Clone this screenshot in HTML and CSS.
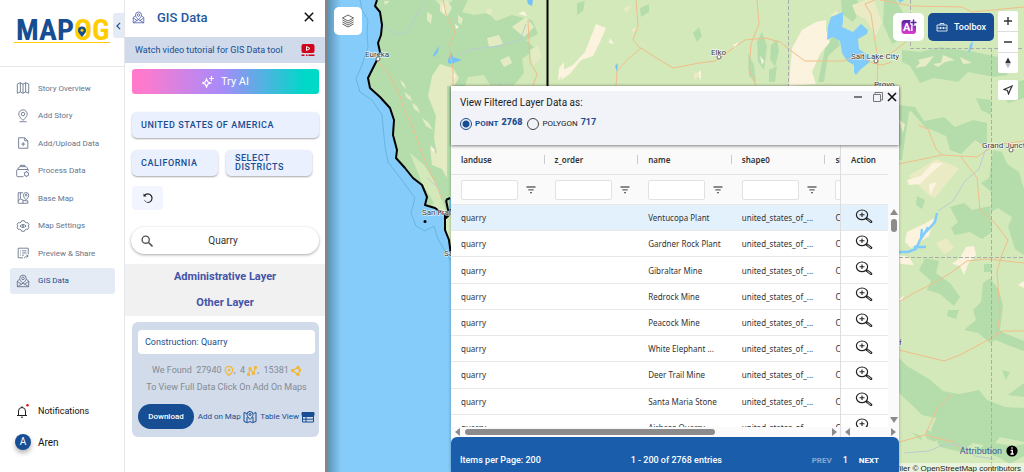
FILE: index.html
```
<!DOCTYPE html>
<html lang="en">
<head>
    <meta charset="UTF-8">
    <meta name="viewport" content="width=device-width, initial-scale=1.0">
    <title>MAPOG - GIS Data</title>
    <link rel="stylesheet" href="styles.css">
</head>
<body>
    <!-- shared icons -->
    <svg class="sprite" aria-hidden="true">
        <symbol id="i-filter" viewBox="0 0 10 8"><path d="M.5 1h9M2.3 3.8h5.4M4 6.6h2" stroke="#666" stroke-width="1.3"/></symbol>
        <symbol id="i-zoom" viewBox="0 0 18 14"><ellipse cx="7" cy="5.8" rx="5.6" ry="4.8" stroke="#222" stroke-width="1.2"/><path d="M4.5 5.8h5M7 3.5v4.6M10.8 9.3l1.2 1" stroke="#222" stroke-width="1.1"/><path d="M12 9.8l4 3" stroke="#222" stroke-width="2.6" stroke-linecap="round"/><path d="M12.4 10.1l3.4 2.6" stroke="#fff" stroke-width=".8"/></symbol>
        <symbol id="i-mappin" viewBox="0 0 16 16"><path d="M4.300 6L1.500 8v6.500h13V8l-2.800-2M1.500 8.500l5 3.500M14.500 8.500l-5 3.500M1.500 14.500l6.500-4 6.500 4M8 10.500C5.500 8.500 4.300 7 4.300 5a3.700 3.700 0 017.400 0c0 2-1.200 3.500-3.700 5.500z"/><circle cx="8" cy="5" r="1.500"/></symbol>
    </svg>

    <nav class="sidebar">
        <div class="logo">
            <svg viewBox="0 0 98 34" width="98" height="34">
                <text x="2" y="27" class="logo-text"><tspan fill="#174d92">MAP</tspan><tspan fill="#fc0">OG</tspan></text>
                <path d="M0 29.500h96" stroke="#fc0" stroke-width="1.200"/>
                <path d="M68 24c-3-3.500-4-4.800-4-6.500a4 4 0 018 0c0 1.700-1 3-4 6.500z" fill="#174d92"/>
                <circle cx="68" cy="17.300" r="1.500" fill="#fc0"/>
            </svg>
            <button class="collapse" aria-label="Collapse"><svg viewBox="0 0 6 10" width="5" height="8"><path d="M5 1L1 5l4 4" stroke="#174d92" stroke-width="1.400"/></svg></button>
        </div>
        <div class="menu">
            <a href="#"><svg viewBox="0 0 16 16"><path d="M1.500 3.500L5 2v10.500L1.500 14zM5 2l3 1.500V14l-3-1.500M8 3.500L11 2v10.500L8 14M11 2l3.500 1.500V14L11 12.500"/></svg>Story Overview</a>
            <a href="#"><svg viewBox="0 0 16 16"><path d="M8 13C4.500 9.500 3.200 8 3.200 5.800a4.800 4.800 0 019.600 0C12.800 8 11.500 9.500 8 13zM4 14.500h8"/><circle cx="8" cy="5.800" r="2"/></svg>Add Story</a>
            <a href="#"><svg viewBox="0 0 16 16"><path d="M3 2h7l3.500 3.500V14H3zM10 2v3.500h3.500M8.200 7v4.500M6 9.200h4.500"/></svg>Add/Upload Data</a>
            <a href="#"><svg viewBox="0 0 16 16"><path d="M8.500 14.500H2a1.200 1.200 0 01-1.200-1.200V7.500A1.200 1.200 0 012 6.300h12V8M2.500 6V4.500L4.500 3h7L13 4.500V6M5 3V1.500h5V3"/><circle cx="12" cy="11.500" r="2.400"/><path d="M12 8v1M12 14v1M9 9.800l.8.500M14.200 12.700l.8.500M9 13.200l.8-.5M14.200 10.300l.8-.5"/></svg>Process Data</a>
            <a href="#"><svg viewBox="0 0 16 16"><path d="M8 2H2.500v12h11v-3M5 2v7l-2.500 2.500M5 9l3 1.500V14M8 10.500l5.500 1"/><path d="M11.500 10C9 7.500 8.500 6 8.500 4.800a3 3 0 016 0c0 1.200-.5 2.700-3 5.200z"/><circle cx="11.500" cy="4.800" r="1"/></svg>Base Map</a>
            <a href="#"><svg viewBox="0 0 16 16"><path d="M6.500 2h3l.7 1.500 1.700.8 1.500-.2 1.400 2.400-1 1.500 1 1.500-1.400 2.400-1.500-.2-1.700.8L9.500 14h-3l-.7-1.500-1.700-.8-1.500.2-1.400-2.400 1-1.500-1-1.500 1.400-2.400 1.500.2 1.700-.8z"/><path d="M4.500 8q3.500-3.500 7 0-3.500 3.500-7 0z"/><circle cx="8" cy="8" r=".8"/></svg>Map Settings</a>
            <a href="#"><svg viewBox="0 0 16 16"><path d="M8 13.500H2.500V2.500h11.500v7M4.500 5.500h1M7 5.500h5M4.500 8h1M7 8h5M4.500 10.500h1M7 10.500h2M9.500 14c.5-2 2-2.500 4-2.500M12 10l2 1.500-2 1.700"/></svg>Preview &amp; Share</a>
            <a href="#" class="active"><svg><use href="#i-mappin"/></svg>GIS Data</a>
        </div>
        <div class="account">
            <a href="#" class="notify"><svg viewBox="0 0 16 16"><path d="M2 12.500h10M3.500 12.500V8a3.500 3.500 0 017 0v4.500M7 4.500V3.200M6 14.200h2" stroke="#222"/><circle cx="12.500" cy="2.200" r="1.300" fill="#e01818" stroke="none"/></svg>Notifications</a>
            <a href="#"><span class="avatar">A</span>Aren</a>
        </div>
    </nav>

    <aside class="panel">
        <header class="panel-head">
            <svg class="head-icon"><use href="#i-mappin"/></svg>
            <h1>GIS Data</h1>
            <button class="plain" aria-label="Close"><svg viewBox="0 0 10 10" width="10" height="10"><path d="M.8.8l8.400 8.400M9.200.8L.8 9.200" stroke="#111" stroke-width="1.500"/></svg></button>
        </header>
        <a href="#" class="tutorial">Watch video tutorial for GIS Data tool
            <svg viewBox="0 0 14 14" width="14" height="14"><rect x=".5" y="1" width="13" height="9" rx="2" fill="#d0021b"/><path d="M5.500 3.500l3.500 2-3.500 2z" stroke="#fff"/><path d="M.5 12.300h3M5 12.300h1.500M7.500 12.300h6" stroke="#d0021b" stroke-width="1.400"/></svg>
        </a>
        <div class="filters">
            <button class="try-ai"><svg viewBox="0 0 12 12" width="12" height="12"><path d="M4.500 3l1.200 2.900L8.500 7 5.700 8.200 4.500 11 3.300 8.200.5 7l2.800-1.100z" stroke="#fff" stroke-width="1.200"/><path d="M9.500 0v5M7 2.500h5" stroke="#fff" stroke-width="1.200"/></svg>Try AI</button>
            <button class="choice">UNITED STATES OF AMERICA</button>
            <div class="choice-row">
                <button class="choice">CALIFORNIA</button>
                <button class="choice">SELECT DISTRICTS</button>
            </div>
            <button class="reset" aria-label="Reset"><svg viewBox="0 0 12 12" width="12" height="12"><path d="M2.200 3.800A4.300 4.300 0 116 10.500" stroke="#222" stroke-width="1.200"/><path d="M6 10.500a4.300 4.300 0 01-3.800-3" stroke="#222" stroke-dasharray="1.500 1"/><path d="M1.500 1.500v3h3z" fill="#222"/></svg></button>
            <label class="search">
                <svg viewBox="0 0 12 12" width="12" height="12"><circle cx="4.700" cy="4.700" r="3.600" stroke="#555" stroke-width="1.400"/><path d="M7.500 7.500l4 4" stroke="#555" stroke-width="1.600"/></svg>
                <input type="text" value="Quarry" aria-label="Search layer">
            </label>
        </div>
        <div class="layers">
            <h2>Administrative Layer</h2>
            <h2>Other Layer</h2>
        </div>
        <section class="card">
            <h3>Construction: Quarry</h3>
            <p>We Found &nbsp;27940 <svg viewBox="0 0 10 10"><path d="M5 9.500C2.500 7 1.200 5.800 1.200 4.200a3.800 3.800 0 017.600 0C8.800 5.800 7.500 7 5 9.500zM5 2.800v2.800M3.600 4.200h2.800"/></svg>, &nbsp;4 <svg viewBox="0 0 10 10"><path d="M1.500 8.500l1.500-6 3.500 5 2-6"/><circle cx="1.500" cy="8.500" r="1"/><circle cx="3" cy="2.500" r="1"/><circle cx="6.500" cy="7.500" r="1"/><circle cx="8.500" cy="1.500" r="1"/></svg>, &nbsp;15381 <svg viewBox="0 0 10 10"><path d="M1.500 4.500l5.500-3 2 2.500-2 4.500z"/><circle cx="1.500" cy="4.500" r="1"/><circle cx="7" cy="1.500" r="1"/><circle cx="9" cy="4" r=".8"/><circle cx="7" cy="8.500" r="1"/></svg></p>
            <p>To View Full Data Click On Add On Maps</p>
            <div class="card-actions">
                <button class="download">Download</button>
                <a href="#">Add on Map<svg viewBox="0 0 14 14"><path d="M4 3.500L1 2.500v9l3.500 1.200L7 11.500l2.500 1.200L13 11.500v-9l-2.500 1M4 7v5.500M10 7v5.500M7 9.500C5 7.500 4 6 4 4.500a3 3 0 016 0C10 6 9 7.500 7 9.500z"/><circle cx="7" cy="4.500" r="1"/></svg></a>
                <a href="#">Table View<svg viewBox="0 0 14 14"><path d="M1.500 3h11v9h-11zM1.500 6.500h11M1.500 9.200h11M5 6v6"/><path d="M1 2.500h12v3H1z" fill="#174d92"/></svg></a>
            </div>
        </section>
    </aside>

    <main class="map">
        <svg class="basemap" viewBox="327 0 697 472" preserveAspectRatio="xMidYMid slice">
            <rect x="327" width="697" height="472" fill="#d4e9b9"/>
            <!-- forests, northern California -->
            <path fill="#b5ddac" d="M340 0h95l8 8 10-8h15l-6 12 12 3 14-2 8 8 16-6 20 5 6 14-12 6 10 9-14 10 2 14-10 12h-24l-6-10-16 2-10 30v110l-12-6-8-24-14-22-14-12 12 30 12 20-8 10-14-6H340z"/>
            <path fill="#e3ebc2" d="M440 64l13 4 6 10-5 8h-7v92l-8-14-5-26 2-22-8-20 4-20zM430 147l8 8 4 14-10-4zM404 92l6 4 2 5-5-3zM412 103l5 3 3 7-6-4zM400 80l4 3 2 6-4-4zM422 118l6 4 5 8-7-4zM427 12l5 3-1 9-4-4zM440 2l7-2 5 8-5 9-7-6zM384 1h6l-5 4zM458 15l5 4-2 6-3-3zM487 38l12-3 4 9-14 3zM512 27l14-10 8 10-10 10zM530 50l8-5 4 12-9 9zM487 8l6 2-3 5-4-2zM500 60l9-4 3 7-8 4z"/>
            <path fill="#fcf3df" d="M430 145l5 5-2 3zM442 4l3 5-2 5zM559 68l5-6v11l-6 8zM455 24l4 3-3 2zM518 14l6-3 3 5zM452 73l4 2-2 5z"/>
            <!-- Nevada and Utah -->
            <path fill="#b5ddac" d="M577 3l8-2-2 10-6 4zM640 8l9-4v8l-8 5zM693 33l6-6 3 9-5 6zM757 42l5-10 5 14-3 24-6-8zM748 53l6 12 2 17-7-6zM771 45l6-6 2 12-4 16-5-8zM769 70l8-4-2 16h-6zM826 44l10-10 4 11-12 11-4 26h-6zM841 0h16l4 10-8 12-11-8zM884 0h12l8 14-9 8 5 18-8 4-9-20zM902 50l18 2 20-5 30 4 28 6 10 18-14 2-26-5-10 10-24-4-14 5-10-17-8-4z"/>
            <path fill="#fcf3df" d="M596 24l10 4-6 14-7 14-12 4-11 14-9 6 2-10 10-5 12-13zM789 86l3-38 10-18 14-8 10-2v10l4 12-10 12-8 18 4 12zM760 56l4 5-2 4zM733 45l6-3-4 7zM610 38l4 6-5-1zM697 74l4-4v10z"/>
            <path fill="#eaebc5" d="M624 8l8-3-6 8zM632 29l8-2-7 6zM640 40l6 7-4-3zM694 72l6 3-6 5zM830 16l6-6 6 7zM852 5l14-5h8l8 22-6 14-10-17-10-4z"/>
            <g fill="#e8ecc5"><path d="M918 60l16-4-8 10-11 2 5-5zM943 55l12 5-14 3zM960 57l12 6-9 1zM933 64l12-2-7 5z"/></g>
            <!-- eastern Utah and Colorado -->
            <path fill="#b5ddac" d="M899 105l16 2 9 14 20-4 11 10 18-7 14 3v25l-12-8-14 14-11-4-4-14-21-9-14-16-12 8zM899 112h10l-7 48h-3zM1000 86l24-6v18l-16 5zM976 98l15 2v15l-10-5zM993 150l9 2 5 12 12 8 5 17v66l-9-6-7-22 4-10-14-9-7 4v-20l-10-9 8-5zM950 207l14-4 8 7 18-4 2 26-10 7-12-7-15 3-4-7 7-6zM925 258l14 3-3 12 14 10 10 14-6 9-14-12-13-4 4-9-12-11zM917 196l8 4-3 9-6-4zM983 283l7-5 9 12 4 16-4 32-9 5-12-10-14-3 12-10-3-10 8-8zM948 310l11 0-3 9-9-3zM991 324l13 9 20 8v10l-14-5-19-8zM1002 370l8 2-4 8zM899 358l8 8 22 13 14 12 16 3 20-4 8 10 18 7 19 1v34l-24-5-8 10-19-4-12 9-21-5-9-17 5-12-14-3-8-8-15-14zM1008 395l16-12v14zM984 264h7v8h-7z"/>
            <path fill="#b5ddac" d="M927 430l12 5-4 7-9-4zM911 432l10 4 1 5zM988 442l26 4 10-2v12l-14 8-12-7-20-7z"/>
            <path fill="#eaebc5" d="M908 176l14-8 14-9 16 6 7 4-13 15-11 14-6-3zM936 243l11-5 7 10-10 6zM899 120l6 4-2 9z"/>
            <path fill="#fcf3df" d="M907 180l14-4 12-13 10 0-14 12-9 9-11 1zM929 184l8-2-7 13zM907 232l17-8 10-6-5 18-18 12-6-6zM899 255l10 2 5 8-14-1zM960 258l6-11 8-1 2 9-8 9-4 11-4-9-8-2zM899 299l5-4-3 8zM1018 285l6-4v7z"/>
            <!-- ocean -->
            <path fill="#85ccfa" d="M327 0h50l-2 6 5 6 2 13-1 10-3 8 2 9-2 6-6 12-4 8 2 10 10 9 10 11 4 12-1 15 4 15-1 8 9 10 8 10 9 7 5 12-2 8 10 3 10 7v15l4 10 2 15v230H327z"/>
            <path d="M360 0l2 10 6 10-1 12 1 15-6 18-6 14 4 13 12 8 10 15 3 32 3 15 13 17 14 19-4 15 5 13 9 5 9-5 4 13 13 22" stroke="#66b5e2"/>
            <path fill="#74c2f7" d="M433 55l6-9-1 6-4 5zM448 60l3-8 2 5 9 3-6 2-4 2-4-1zM527 0h6l-1 6-4-2zM449 200l3-4v20l-3-5zM615 66l3-3-1 9z"/>
            <path fill="#82ccfb" d="M831 17l12-5v10l-1 5 11 5 8-8 7 6-1 4-9 5 1 10 10 7 1 6-9 7-5 6-2-3v-7l-7-4-5-8-2-12-7-4-6 3 1-14zM970 44l3-3-1 8-4 4zM909 28l4-3-1 6zM898 0h6l-4 3z"/>
            <path stroke="#82ccfb" stroke-width="2.500" d="M899 252h9l8-3 4-9 6-9 2-4M914 247h12M921 238l1-9M926 232l9-10 2-9"/>
            <!-- roads and rivers -->
            <path stroke="#f1bd8b" d="M443 0l3 14 9 18-6 15 4 23v16M378 62l12 14 10 20 4 14 10 20 8 24 8 18 6 12 6 16M528 20l2 42 7 12-4 12M616 86l1-15 11-12 13-11 17 11 15 9 26-5 16-2 20-14 10-7 20-2 15 4 14 11 11 8h38l17-6 12 8 10 2 10-3M636 0l2 26-5 14 8 9M757 0l2 24-8 20-2 25 7 17M875 0l-10 4 6 10 4 27 3 19-1 26M878 60l16-9 12-9M880 0l32 6 50 1 10 5 52-5M899 164l43-9 35 2 18-12 29-4M918 125l10 4 8 20 6 6M961 157l16 21 3 32 14 12 14 18-6 14-5 18 3 40-3 22M899 302l15-9 20-10 15-9 18-13 20-2 37 4M899 350l45 11 16-6 26-14 17-10h21M951 395l-14 14-12 26-26 7M925 435l28 7 14 12"/>
            <path stroke="#b9ccd3" d="M382 25l14 10 10-2 12-20 8-12M460 55l12-6 28-3 20-6 6-16M441 190l-14-12M938 211l15-10 12-20 14-12 6-18 5-5M904 453l25-2 14-6 16-1 16 12 18 3M499 86l2-3"/>
            <path stroke="#a9adae" stroke-dasharray="4 2" d="M788.500 0v86M910.500 0v48.500H1024M991.500 48v424M899 257.500h125"/>
            <!-- California outline -->
            <path class="outline" d="M377 0l-2 6 5 6 2 13-1 10-3 8 2 9-2 6-6 12-4 8 2 10 10 9 10 11 4 12-1 15 4 15-1 8 9 10 8 10 9 7 5 12-2 8 10 3 10 7v15l4 10 2 15M446 200l4-2M446 200l2 10-2 8 4-4-4-2 6-2M547.500 0v87"/>
            <circle cx="425" cy="221.500" r="1.500" fill="#000"/>
            <g fill="#fff" stroke="#666"><circle cx="719" cy="57" r="2"/><circle cx="876" cy="61" r="2"/><circle cx="1011" cy="150" r="2"/><circle cx="378" cy="59" r="2"/></g>
            <g class="labels">
                <text x="365" y="57">Eureka</text><text x="422" y="215">San Francisco</text><text x="444" y="256">Santa Cruz</text>
                <text x="711" y="55">Elko</text><text x="851" y="59">Salt Lake City</text><text x="874" y="87">Provo</text>
                <text x="982" y="148">Grand Junction</text><text x="899" y="345">f</text>
            </g>
        </svg>

        <button class="map-btn basemap-btn" aria-label="Layers"><svg viewBox="0 0 14 14" width="14" height="14"><path d="M7 1l5.500 3L7 7 1.500 4zM1.500 6L7 9l5.500-3M1.500 8L7 11l5.500-3M1.500 10L7 13l5.500-3" stroke="#555" stroke-width=".9"/></svg></button>

        <div class="map-tools">
            <button class="map-btn" aria-label="AI">
                <svg viewBox="0 0 16 16" width="16" height="16"><defs><linearGradient id="ai" x2="0" y2="1"><stop stop-color="#5b22a5"/><stop offset="1" stop-color="#d93fd0"/></linearGradient></defs><rect x=".5" y="1" width="14.500" height="14" rx="3" fill="url(#ai)"/><text x="2" y="12" class="ai-text">A</text><path d="M10.800 7v5" stroke="#fff" stroke-width="1.500"/><circle cx="12.500" cy="3.500" r="3.500" fill="#fff"/><path d="M12.500.5v6M9.500 3.500h6" stroke="#5b22a5" stroke-width="1.500"/></svg>
            </button>
            <button class="toolbox"><svg viewBox="0 0 12 12" width="12" height="12"><path d="M1 4h10v6H1zM4 4V2.500h4V4M1 7h3.500M7.500 7H11M4.500 6v2M7.500 6v2M4.500 7h3" stroke="#fff" stroke-width=".8"/></svg>Toolbox</button>
            <div class="zoom-tools">
                <div class="zoom-group">
                    <button aria-label="Zoom in"><svg viewBox="0 0 10 10" width="10" height="10"><path d="M5 1v8M1 5h8" stroke="#333" stroke-width="1.400"/></svg></button>
                    <button aria-label="Zoom out"><svg viewBox="0 0 10 10" width="10" height="10"><path d="M1 5h8" stroke="#333" stroke-width="1.400"/></svg></button>
                    <button aria-label="Reset north"><svg viewBox="0 0 10 12" width="10" height="12"><path d="M5 .5L7.800 6H2.200z" fill="#333"/><path d="M5 11.500L7.800 6H2.200z" fill="#bbc"/></svg></button>
                </div>
                <button class="locate" aria-label="Locate me"><svg viewBox="0 0 10 10" width="10" height="10"><path d="M9 1L1 4.500l3.500 1L5.500 9z" stroke="#333" stroke-width="1.200"/></svg></button>
            </div>
        </div>

        <section class="window">
            <header class="window-head">
                <div class="window-title">
                    <h2>View Filtered Layer Data as:</h2>
                    <div class="window-controls">
                        <button class="plain" aria-label="Minimize"><svg viewBox="0 0 10 10" width="10" height="10"><path d="M1 5h8" stroke="#444" stroke-width="1.400"/></svg></button>
                        <button class="plain" aria-label="Restore"><svg viewBox="0 0 10 10" width="10" height="10"><path d="M.5 2.500h7v7h-7zM2 2V.5h7.500V8H8" stroke="#777"/></svg></button>
                        <button class="plain" aria-label="Close"><svg viewBox="0 0 10 10" width="10" height="10"><path d="M1 1l8 8M9 1L1 9" stroke="#111" stroke-width="1.600"/></svg></button>
                    </div>
                </div>
                <div class="kinds">
                    <label class="picked"><input type="radio" name="kind" checked>POINT <b>2768</b></label>
                    <label><input type="radio" name="kind">POLYGON <b>717</b></label>
                </div>
            </header>

            <div class="grid">
                <div class="pane">
                    <table class="records">
                        <thead>
                            <tr><th>landuse</th><th>z_order</th><th>name</th><th>shape0</th><th>shape1</th></tr>
                            <tr class="search-row">
                                <td><div><input type="text" aria-label="Filter landuse"><svg><use href="#i-filter"/></svg></div></td>
                                <td><div><input type="text" aria-label="Filter z_order"><svg><use href="#i-filter"/></svg></div></td>
                                <td><div><input type="text" aria-label="Filter name"><svg><use href="#i-filter"/></svg></div></td>
                                <td><div><input type="text" aria-label="Filter shape0"><svg><use href="#i-filter"/></svg></div></td>
                                <td><div><input type="text" aria-label="Filter shape1"><svg><use href="#i-filter"/></svg></div></td>
                            </tr>
                        </thead>
                        <tbody>
                            <tr class="selected"><td>quarry</td><td></td><td>Ventucopa Plant</td><td>united_states_of_...</td><td>California</td></tr>
                            <tr><td>quarry</td><td></td><td>Gardner Rock Plant</td><td>united_states_of_...</td><td>California</td></tr>
                            <tr><td>quarry</td><td></td><td>Gibraltar Mine</td><td>united_states_of_...</td><td>California</td></tr>
                            <tr><td>quarry</td><td></td><td>Redrock Mine</td><td>united_states_of_...</td><td>California</td></tr>
                            <tr><td>quarry</td><td></td><td>Peacock Mine</td><td>united_states_of_...</td><td>California</td></tr>
                            <tr><td>quarry</td><td></td><td>White Elephant ...</td><td>united_states_of_...</td><td>California</td></tr>
                            <tr><td>quarry</td><td></td><td>Deer Trail Mine</td><td>united_states_of_...</td><td>California</td></tr>
                            <tr><td>quarry</td><td></td><td>Santa Maria Stone</td><td>united_states_of_...</td><td>California</td></tr>
                            <tr><td>quarry</td><td></td><td>Airbase Quarry</td><td>united_states_of_...</td><td>California</td></tr>
                        </tbody>
                    </table>
                </div>
                <div class="pane pinned">
                    <table>
                        <thead>
                            <tr><th>Action</th></tr>
                            <tr class="search-row"><td></td></tr>
                        </thead>
                        <tbody>
                            <tr class="selected"><td><button class="plain" aria-label="Zoom to"><svg><use href="#i-zoom"/></svg></button></td></tr>
                            <tr><td><button class="plain" aria-label="Zoom to"><svg><use href="#i-zoom"/></svg></button></td></tr>
                            <tr><td><button class="plain" aria-label="Zoom to"><svg><use href="#i-zoom"/></svg></button></td></tr>
                            <tr><td><button class="plain" aria-label="Zoom to"><svg><use href="#i-zoom"/></svg></button></td></tr>
                            <tr><td><button class="plain" aria-label="Zoom to"><svg><use href="#i-zoom"/></svg></button></td></tr>
                            <tr><td><button class="plain" aria-label="Zoom to"><svg><use href="#i-zoom"/></svg></button></td></tr>
                            <tr><td><button class="plain" aria-label="Zoom to"><svg><use href="#i-zoom"/></svg></button></td></tr>
                            <tr><td><button class="plain" aria-label="Zoom to"><svg><use href="#i-zoom"/></svg></button></td></tr>
                            <tr><td><button class="plain" aria-label="Zoom to"><svg><use href="#i-zoom"/></svg></button></td></tr>
                        </tbody>
                    </table>
                </div>
                <div class="vscroll"><i class="up"></i><i class="thumb"></i><i class="down"></i></div>
            </div>
            <div class="hscroll">
                <div class="track"><i class="left"></i><span><i class="thumb"></i></span><i class="right"></i></div>
                <div class="track short"><i class="left"></i><i class="right"></i></div>
            </div>

            <footer class="window-foot">
                <span>Items per Page: 200</span>
                <span>1 - 200 of 2768 entries</span>
                <div class="pager"><button disabled>PREV</button><span>1</span><button>NEXT</button></div>
            </footer>
        </section>

        <div class="credits">
            <a href="#" class="attribution">Attribution <svg viewBox="0 0 12 12" width="12" height="12"><circle cx="6" cy="6" r="5.600" fill="#000"/><path d="M6 2.200v1.600M4.600 5.300H6.300v3.700M4.500 9h3.200" stroke="#fff" stroke-width="1.300"/></svg></a>
            <div class="copyright">© MapTiler © OpenStreetMap contributors</div>
        </div>
    </main>
</body>
</html>
```
FILE: styles.css
```
* {
    box-sizing: border-box;
}
body {
    margin: 0;
    display: flex;
    height: 100vh;
    overflow: hidden;
    font-family: Roboto, Arial, sans-serif;
    font-size: 9px;
    color: #222;
    background-color: #fff;
}
h1, h2, h3, p {
    margin: 0;
}
a {
    text-decoration: none;
    color: #174d92;
}
button {
    font-family: inherit;
    padding: 0;
    border: none;
    cursor: pointer;
}
button svg {
    display: block;
}
svg {
    fill: none;
    flex-shrink: 0;
}
.sprite {
    display: none;
}
.plain {
    background: none;
}

/* sidebar */
.sidebar {
    width: 125px;
    flex-shrink: 0;
    display: flex;
    flex-direction: column;
    border-right: 1px solid #e4e6ea;
}
.logo {
    height: 67px;
    padding: 13px 0 0 14px;
    display: flex;
    justify-content: space-between;
    align-items: flex-start;
    border-bottom: 1px solid #e4e6ea;
}
.logo svg {
    display: block;
}
.logo-text {
    font-family: "Roboto Condensed", "Liberation Sans Narrow", Roboto, sans-serif;
    font-size: 30px;
    font-weight: bold;
}
.collapse {
    width: 11px;
    height: 25px;
    display: flex;
    align-items: center;
    justify-content: center;
    background-color: #e5ebf5;
    border-radius: 3px 0 0 3px;
}
.menu {
    margin: 8px 9px 0 10px;
    min-height: 219px;
    display: flex;
    flex-direction: column;
    justify-content: space-between;
}
.menu a {
    height: 26px;
    padding-left: 6px;
    display: flex;
    align-items: center;
    gap: 8px;
    font-size: 8px;
    color: #67748b;
    border-radius: 3px;
}
.menu svg,
.account svg {
    width: 14px;
    height: 14px;
    stroke: #67748b;
}
.menu .active {
    background-color: #e5ebf4;
    color: #174d92;
}
.account {
    margin-top: auto;
    padding: 0 0 21px 15px;
    display: flex;
    flex-direction: column;
    gap: 13px;
}
.account a {
    height: 18px;
    display: flex;
    align-items: center;
    gap: 7px;
    font-size: 10px;
    color: #111;
}
.account .notify {
    font-size: 9px;
}
.account svg {
    width: 16px;
    height: 16px;
}
.avatar {
    width: 16px;
    height: 16px;
    border-radius: 50%;
    background-color: #174d92;
    color: #fff;
    line-height: 16px;
    text-align: center;
    box-shadow: 0 3px 5px rgba(0, 0, 0, 0.3);
}

/* GIS data panel */
.panel {
    width: 202px;
    flex-shrink: 0;
    border-right: 2px solid #858585;
}
.panel-head {
    height: 37px;
    padding: 0 11px 3px 7px;
    display: flex;
    align-items: center;
}
.head-icon {
    width: 13px;
    height: 13px;
    stroke: #4a5fb0;
}
.panel-head h1 {
    flex: 1;
    margin-left: 12px;
    font-size: 13px;
    font-weight: 500;
    color: #2558a0;
}
.tutorial {
    height: 26px;
    padding: 0 10px;
    display: flex;
    align-items: center;
    justify-content: space-between;
    background-color: #d0daea;
}
.filters {
    padding: 6px 6px 10px 7px;
    display: flex;
    flex-direction: column;
}
.try-ai {
    height: 25px;
    margin-bottom: 18px;
    display: flex;
    align-items: center;
    justify-content: center;
    gap: 7px;
    border-radius: 3px;
    background: linear-gradient(90deg, #ff7acd 5%, #a78bfa 48%, #00d8c8 92%);
    color: #fff;
    font-size: 11px;
}
.choice {
    height: 26px;
    padding: 0 9px;
    border-radius: 5px;
    background-color: #eaf0fe;
    box-shadow: 0 1px 2px rgba(0, 0, 0, 0.35);
    color: #174d92;
    font-size: 9px;
    font-weight: 500;
    line-height: 9px;
    letter-spacing: 0.06em;
    text-align: left;
}
.choice-row {
    margin: 12px 7px 10px 0;
    display: flex;
    gap: 8px;
}
.choice-row .choice {
    flex: 1;
}
.reset {
    width: 31px;
    height: 24px;
    margin-bottom: 17px;
    display: flex;
    align-items: center;
    justify-content: center;
    border-radius: 4px;
    background-color: #f2f5fe;
}
.search {
    height: 27px;
    margin-left: -1px;
    padding: 0 26px 0 10px;
    display: flex;
    align-items: center;
    border-radius: 14px;
    box-shadow: 0 1px 3px rgba(0, 0, 0, 0.35);
}
.search input {
    flex: 1;
    min-width: 0;
    border: none;
    outline: none;
    background: none;
    font-family: inherit;
    font-size: 10px;
    color: #333;
    text-align: center;
}
.layers {
    background-color: #f1f1f1;
    text-align: center;
}
.layers h2 {
    font-size: 11px;
    font-weight: bold;
    line-height: 26px;
    color: #4353a8;
}
.card {
    margin: 6px 6px 0 7px;
    padding: 8px 4px 8px 6px;
    border-radius: 6px;
    background-color: #d1dbea;
}
.card h3 {
    height: 24px;
    margin-bottom: 8px;
    padding-left: 7px;
    border-radius: 4px;
    background-color: #fff;
    font-size: 9px;
    font-weight: normal;
    line-height: 24px;
    color: #174d92;
}
.card p {
    line-height: 17px;
    text-align: center;
    color: #858a92;
}
.card p svg {
    width: 10px;
    height: 10px;
    vertical-align: middle;
    stroke: #f5b52e;
    stroke-width: 1.2;
}
.card-actions {
    margin-top: 8px;
    display: flex;
    align-items: center;
    justify-content: space-between;
}
.card-actions a {
    display: flex;
    align-items: center;
    gap: 2px;
    font-size: 8px;
}
.card-actions svg {
    width: 14px;
    height: 14px;
    stroke: #174d92;
}
.download {
    width: 56px;
    height: 25px;
    border-radius: 13px;
    background-color: #174d92;
    color: #fff;
    font-size: 8px;
    font-weight: 500;
}

/* map */
.map {
    flex: 1;
    min-width: 0;
    position: relative;
    display: flex;
    overflow: hidden;
}
.basemap {
    position: absolute;
    width: 100%;
    height: 100%;
}
.map::before {
    content: "";
    position: absolute;
    z-index: 1;
    width: 14px;
    height: 100%;
    background: linear-gradient(90deg, rgba(40, 70, 90, 0.45), rgba(40, 70, 90, 0));
}
.outline {
    stroke: #000;
    stroke-width: 2;
    stroke-linejoin: round;
}
.labels {
    font-size: 8px;
    fill: #333;
    stroke: #fff;
    stroke-width: 1;
    paint-order: stroke;
}
.ai-text {
    font-size: 11px;
    font-weight: bold;
    fill: #fff;
}
.map-btn {
    height: 28px;
    display: flex;
    align-items: center;
    justify-content: center;
    border-radius: 5px;
    background-color: #fff;
}
.basemap-btn {
    position: absolute;
    z-index: 2;
    top: 7px;
    left: 7px;
    width: 28px;
}
.map-tools {
    position: absolute;
    top: 11px;
    right: 6px;
    display: flex;
    align-items: flex-start;
    gap: 4px;
}
.map-tools .map-btn {
    width: 31px;
    margin-top: 2px;
}
.toolbox {
    width: 66px;
    height: 28px;
    margin-top: 2px;
    display: flex;
    align-items: center;
    justify-content: center;
    gap: 6px;
    border-radius: 5px;
    background-color: #174d92;
    color: #fff;
    font-size: 9px;
    font-weight: 500;
}
.zoom-group {
    margin-bottom: 7px;
}
.zoom-tools button {
    width: 20px;
    height: 20px;
    display: flex;
    align-items: center;
    justify-content: center;
    background-color: #fff;
}
.zoom-group button + button {
    height: 21px;
    border-top: 1px solid #ddd;
}
.zoom-group,
.locate {
    border-radius: 2px;
    overflow: hidden;
}

/* layer data window */
.window {
    position: relative;
    z-index: 2;
    flex: 1;
    min-width: 0;
    margin: 86px 125px 0 124px;
    display: flex;
    flex-direction: column;
    background-color: #fafafa;
    box-shadow: 0 0 3px rgba(0, 0, 0, 0.3);
}
.window-head {
    position: relative;
    z-index: 1;
    height: 59px;
    padding: 5px 2px 0 9px;
    border-top: 5px solid #fff;
    background-color: #f2f3f8;
    box-shadow: 0 1px 3px rgba(0, 0, 0, 0.5);
}
.window-title {
    display: flex;
    justify-content: space-between;
    align-items: flex-start;
}
.window-title h2 {
    font-size: 10px;
    font-weight: normal;
    line-height: 13px;
    color: #222;
}
.window-controls {
    margin-top: -4px;
    display: flex;
    gap: 4px;
}
.window-controls button:first-child {
    margin-right: 6px;
}
.kinds {
    margin-top: 7px;
    display: flex;
    gap: 5px;
}
.kinds label {
    display: flex;
    align-items: center;
    gap: 3px;
    font-size: 8px;
    line-height: 12px;
}
.kinds .picked {
    font-weight: bold;
    color: #174d92;
}
.kinds b {
    padding-bottom: 3px;
    font-size: 9px;
    line-height: 12px;
    color: #174d92;
}
.kinds input {
    appearance: none;
    width: 12px;
    height: 12px;
    margin: 0;
    border: 1px solid #444;
    border-radius: 50%;
}
.kinds input:checked {
    border-color: #174d92;
    background: radial-gradient(circle, #174d92 3px, transparent 4px);
}
.grid {
    height: 282px;
    display: flex;
    overflow: hidden;
    font-family: "Noto Sans", "Open Sans", sans-serif;
}
.pane {
    flex: 1;
    min-width: 0;
    overflow: hidden;
}
.pinned {
    flex: 0 0 48px;
    border-left: 1px solid #ddd;
}
.grid table {
    width: 100%;
    height: 296px;
    border-collapse: separate;
    border-spacing: 0;
    table-layout: fixed;
}
.grid .records {
    width: 468px;
}
.grid th {
    position: relative;
    height: 30px;
    padding: 0 10px;
    border-bottom: 1px solid #e4e4e4;
    font-size: 8px;
    font-weight: 600;
    text-align: left;
    color: #333;
}
.records th::after {
    content: "";
    position: absolute;
    top: 10px;
    right: 0;
    height: 9px;
    border-right: 1px solid #ccc;
}
.grid td {
    height: 26px;
    padding: 0 0 0 10px;
    border-bottom: 1px solid #e8e8e8;
    background-color: #fff;
    font-size: 8px;
    white-space: nowrap;
    color: #333;
}
.grid .search-row td {
    height: 30px;
    background-color: #fafafa;
}
.grid .selected td {
    background-color: #e3f1fc;
}
.search-row div {
    display: flex;
    align-items: center;
    gap: 8px;
}
.search-row input {
    width: 57px;
    height: 20px;
    border: 1px solid #e2e2e2;
    border-radius: 2px;
    background-color: #fff;
}
.search-row svg {
    width: 10px;
    height: 8px;
}
.pinned .plain {
    display: block;
    margin: 0 0 4px 4px;
}
.pinned svg {
    width: 18px;
    height: 14px;
}
.vscroll {
    width: 11px;
    padding: 64px 2px 4px 3px;
    display: flex;
    flex-direction: column;
    align-items: center;
    gap: 4px;
}
.vscroll .thumb {
    width: 6px;
    height: 13px;
    border-radius: 3px;
    background-color: #8b8b8b;
}
.up,
.down {
    border: 4px solid transparent;
    border-top-width: 0;
    border-bottom: 6px solid #8b8b8b;
}
.down {
    margin-top: auto;
    transform: rotate(180deg);
}
.hscroll {
    height: 10px;
    display: flex;
}
.track {
    flex: 1;
    padding: 0 3px 0 4px;
    display: flex;
    align-items: center;
    justify-content: space-between;
    gap: 5px;
}
.track.short {
    flex: 0 0 59px;
    border-left: 1px solid #ddd;
}
.track span {
    flex: 1;
}
.track .thumb {
    display: block;
    width: 69%;
    height: 6px;
    border-radius: 3px;
    background-color: #8b8b8b;
}
.left,
.right {
    border: 4px solid transparent;
    border-left-width: 0;
    border-right: 5px solid #8b8b8b;
}
.right {
    transform: rotate(180deg);
}
.window-foot {
    flex: 1;
    padding: 15px 20px 4px 9px;
    display: flex;
    align-items: center;
    justify-content: space-between;
    border-radius: 6px 6px 0 0;
    background-color: #1a5dab;
    color: #fff;
    font-size: 9px;
    font-weight: 500;
}
.pager {
    display: flex;
    align-items: center;
    gap: 11px;
}
.pager button {
    background: none;
    color: #fff;
    font-size: 8px;
    font-weight: bold;
}
.pager button:disabled {
    color: #86a9d3;
}
.credits {
    position: absolute;
    right: 0;
    bottom: 0;
    display: flex;
    flex-direction: column;
    align-items: flex-end;
    gap: 6px;
}
.attribution {
    padding-right: 6px;
    display: flex;
    align-items: center;
    gap: 4px;
    color: #35619f;
}
.copyright {
    height: 9px;
    padding-right: 3px;
    overflow: hidden;
    background-color: rgba(255, 255, 255, 0.5);
    font-family: "Liberation Sans", Arial, sans-serif;
    font-size: 8px;
    line-height: 11px;
}
```
